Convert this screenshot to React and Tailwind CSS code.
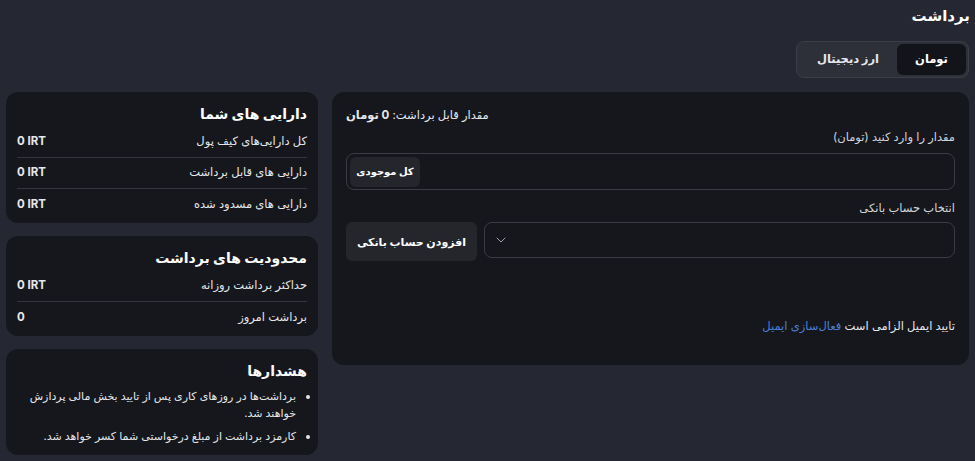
import React, { useState } from 'react';
import { ChevronDown } from 'lucide-react';

const font = { fontFamily: 'Inter, "DejaVu Sans", sans-serif' };

const assets = [
  { label: 'کل دارایی‌های کیف پول', value: '0 IRT' },
  { label: 'دارایی های قابل برداشت', value: '0 IRT' },
  { label: 'دارایی های مسدود شده', value: '0 IRT' }
];

const limits = [
  { label: 'حداکثر برداشت روزانه', value: '0 IRT' },
  { label: 'برداشت امروز', value: '0' }
];

function InfoCard({ title, rows }) {
  return (
    <div className="rounded-xl bg-[#15171c] px-[11px] pt-[12px] pb-[3px]">
      <h3 className="text-[14px] font-bold text-white leading-[20px]">{title}</h3>
      <div className="mt-[3px]">
        {rows.map((row, i) => (
          <div
            key={row.label}
            className={`flex items-center justify-between h-[31px] ${i < rows.length - 1 ? 'border-b border-[#34363d]' : ''}`}
          >
            <span className="text-[11.5px] text-[#e5e7eb]">{row.label}</span>
            <span className="text-[11.5px] font-bold text-[#e5e7eb]" dir="ltr">{row.value}</span>
          </div>
        ))}
      </div>
    </div>
  );
}

export default function App() {
  const [tab, setTab] = useState('toman');

  return (
    <div dir="rtl" style={font} className="min-h-[461px] w-[975px] bg-[#252832] px-[6px] pt-[6px] text-white">
      <h1 className="text-[15px] font-bold leading-[20px] mr-[-1px]">برداشت</h1>

      <div className="mt-[15px] flex">
        <div className="flex rounded-lg border border-[#3b3e47] bg-[#2d3039] p-[2px]">
          <button
            onClick={() => setTab('toman')}
            className={`h-[31px] w-[69px] rounded-md text-[11.5px] font-bold ${tab === 'toman' ? 'bg-[#121419] text-white' : 'text-[#e5e7eb]'}`}
          >
            تومان
          </button>
          <button
            onClick={() => setTab('crypto')}
            className={`h-[31px] w-[98px] rounded-md text-[11.5px] font-bold ${tab === 'crypto' ? 'bg-[#121419] text-white' : 'text-[#e5e7eb]'}`}
          >
            ارز دیجیتال
          </button>
        </div>
      </div>

      <div className="mt-[14px] flex items-start gap-[14px]">
        <div className="flex-1 h-[273px] rounded-xl bg-[#15171c] px-[14px] pt-[15px]">
          <div className="flex justify-end">
            <p className="text-[11.5px] text-[#e5e7eb]">
              مقدار قابل برداشت: <span className="font-bold">0 تومان</span>
            </p>
          </div>

          <label className="mt-[5px] block text-[11.5px] text-[#d1d5db] leading-[16px]">مقدار را وارد کنید (تومان)</label>
          <div className="mt-[8px] flex h-[37px] items-center justify-end rounded-lg border border-[#3a3c44] px-[3px]">
            <button className="h-[30px] w-[70px] rounded-md bg-[#24262c] text-[10px] font-bold text-white">کل موجودی</button>
          </div>

          <label className="mt-[10px] block text-[11.5px] text-[#d1d5db] leading-[16px]">انتخاب حساب بانکی</label>
          <div className="mt-[6px] flex gap-[7px]">
            <div className="flex h-[36px] flex-1 items-center justify-end rounded-lg border border-[#3a3c44] px-[8px]">
              <ChevronDown size={16} strokeWidth={1.5} className="text-[#9ca3af]" />
            </div>
            <button className="h-[39px] w-[131px] rounded-md bg-[#24262c] text-[11px] font-bold text-white">افزودن حساب بانکی</button>
          </div>

          <p className="mt-[57px] text-[11.5px] text-[#e5e7eb]">
            تایید ایمیل الزامی است <span className="text-[#4b7fd8]">فعال‌سازی ایمیل</span>
          </p>
        </div>

        <div className="flex w-[312px] flex-col gap-[13px]">
          <InfoCard title="دارایی های شما" rows={assets} />
          <InfoCard title="محدودیت های برداشت" rows={limits} />
          <div className="rounded-xl bg-[#15171c] pr-[11px] pl-[6px] pt-[12px] pb-[10px]">
            <h3 className="text-[14px] font-bold leading-[20px]">هشدارها</h3>
            <ul className="mt-[7px] list-disc pr-[11px] text-[11px] leading-[17px] text-[#e5e7eb] space-y-[6px]">
              <li>برداشت‌ها در روزهای کاری پس از تایید بخش مالی پردازش خواهند شد.</li>
              <li>کارمزد برداشت از مبلغ درخواستی شما کسر خواهد شد.</li>
            </ul>
          </div>
        </div>
      </div>
    </div>
  );
}
